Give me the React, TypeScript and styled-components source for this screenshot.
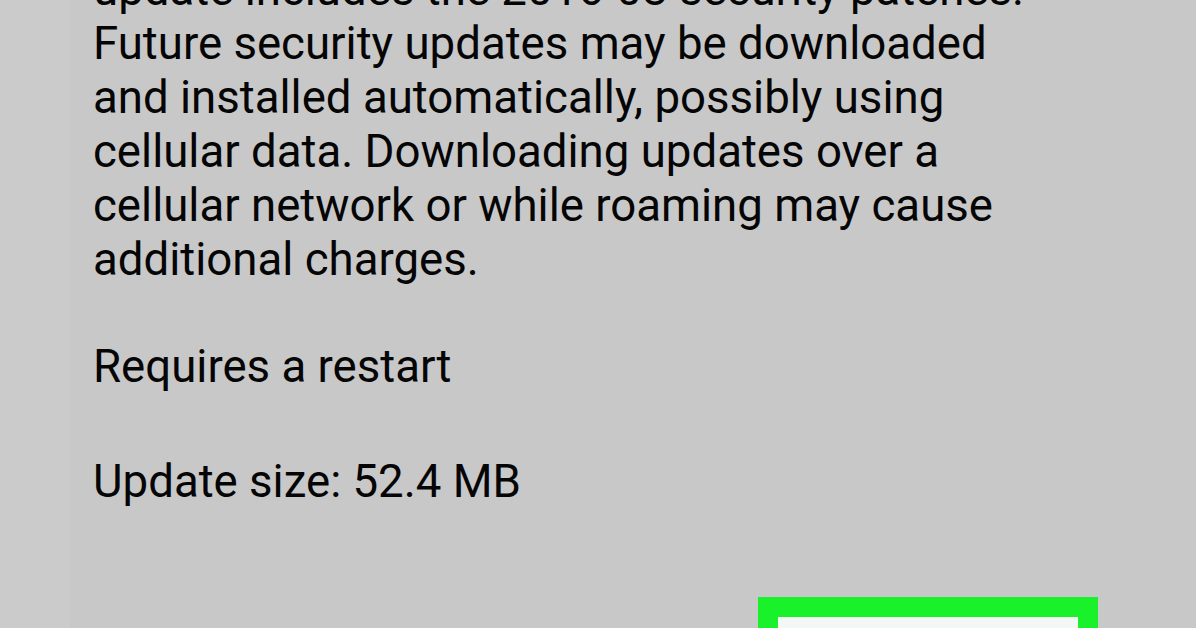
import React from "react";
import styled, { createGlobalStyle } from "styled-components";

const Global = createGlobalStyle`
  html, body { margin: 0; padding: 0; background: #c8c8c8; overflow: hidden; }
  #root { width: 1196px; height: 628px; overflow: hidden; }
`;

const Screen = styled.div`
  width: 1196px;
  height: 628px;
  overflow: hidden;
  display: flex;
  background: #c8c8c8;
`;

const Gutter = styled.div`
  width: 70px;
  flex: none;
  background: #cbcbcb;
`;

const Content = styled.div`
  flex: 1;
  display: flex;
  flex-direction: column;
  padding-left: 23px;
  margin-top: -37px;
`;

const Paragraph = styled.p<{ $gap?: number }>`
  margin: 0;
  margin-top: ${(p) => p.$gap ?? 0}px;
  font-family: Roboto, "Noto Sans", sans-serif;
  font-size: 45.6px;
  line-height: 54px;
  color: #050505;
  white-space: nowrap;
`;

const Line = styled.span`
  display: block;
`;

const ButtonRow = styled.div`
  display: flex;
  justify-content: flex-end;
  padding-right: 98px;
  margin-top: 88px;
`;

const HighlightedButton = styled.div`
  width: 300px;
  height: 80px;
  border: 20px solid #19f22a;
  background: #f4f8f4;
  flex: none;
`;

const lines = [
  "update includes the 2016-08 security patches.",
  "Future security updates may be downloaded",
  "and installed automatically, possibly using",
  "cellular data. Downloading updates over a",
  "cellular network or while roaming may cause",
  "additional charges.",
];

export default function App() {
  return (
    <>
      <Global />
      <Screen>
        <Gutter />
        <Content>
          <Paragraph>
            {lines.map((l) => (
              <Line key={l}>{l}</Line>
            ))}
          </Paragraph>
          <Paragraph $gap={53}>Requires a restart</Paragraph>
          <Paragraph $gap={61}>Update size: 52.4 MB</Paragraph>
          <ButtonRow>
            <HighlightedButton />
          </ButtonRow>
        </Content>
      </Screen>
    </>
  );
}
